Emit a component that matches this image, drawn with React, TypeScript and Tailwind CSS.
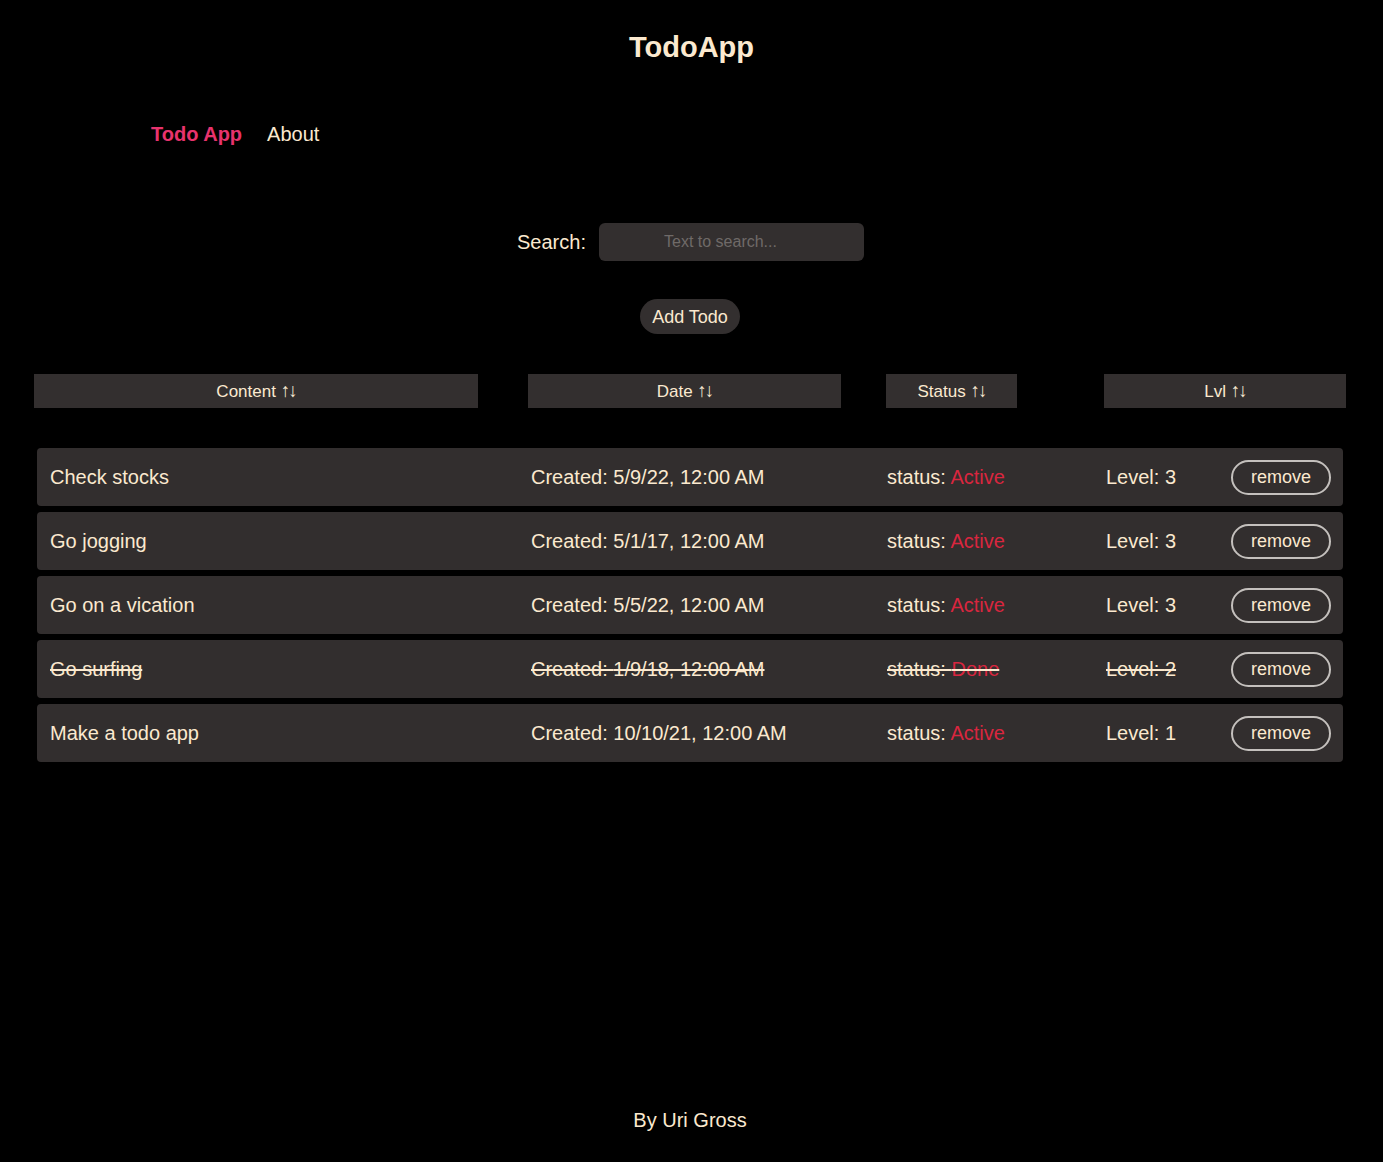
import { useState } from "react";

type Todo = {
  id: number;
  content: string;
  created: string;
  done: boolean;
  level: number;
};

const initialTodos: Todo[] = [
  { id: 1, content: "Check stocks", created: "5/9/22, 12:00 AM", done: false, level: 3 },
  { id: 2, content: "Go jogging", created: "5/1/17, 12:00 AM", done: false, level: 3 },
  { id: 3, content: "Go on a vication", created: "5/5/22, 12:00 AM", done: false, level: 3 },
  { id: 4, content: "Go surfing", created: "1/9/18, 12:00 AM", done: true, level: 2 },
  { id: 5, content: "Make a todo app", created: "10/10/21, 12:00 AM", done: false, level: 1 },
];

function SortLabel({ label }: { label: string }) {
  return (
    <>
      {label} <span className="text-[19px] leading-[20px] tracking-[-2px] text-[#f3e6cf]">↑↓</span>
    </>
  );
}

export default function App() {
  const [todos, setTodos] = useState<Todo[]>(initialTodos);
  const [search, setSearch] = useState("");

  const visible = todos.filter((t) => t.content.toLowerCase().includes(search.toLowerCase()));

  return (
    <div className="min-h-screen flex flex-col bg-black text-[#fbe9cf] font-['Liberation_Sans',Arial,sans-serif]">
      <header className="pt-[29px]">
        <h1 className="text-center text-[29px] leading-[36px] font-bold">TodoApp</h1>
        <nav className="flex items-center gap-[25px] pl-[151px] mt-[57px] text-[20px] leading-[24px]">
          <a className="font-bold text-[#e8336d] cursor-pointer">Todo App</a>
          <a className="cursor-pointer">About</a>
        </nav>
      </header>

      <main className="flex-1 flex flex-col">
        <div className="flex items-center justify-center gap-[13px] mt-[77px] pr-[2px]">
          <label className="text-[20px] leading-[24px]">Search:</label>
          <input
            value={search}
            onChange={(e) => setSearch(e.target.value)}
            placeholder="Text to search..."
            className="w-[265px] h-[38px] rounded-[6px] bg-[#332f2f] text-center pr-[22px] text-[16px] text-[#fbe9cf] placeholder:text-[#6f6a68] outline-none"
          />
        </div>

        <div className="flex justify-center mt-[38px]">
          <button className="w-[100px] h-[35px] rounded-full bg-[#332f2f] text-[18px] leading-[22px] -ml-[3px]">Add Todo</button>
        </div>

        <div className="flex mt-[40px] pl-[34px] text-[17px] leading-[20px]">
          <button className="w-[444px] h-[34px] bg-[#332f2f]"><SortLabel label="Content" /></button>
          <button className="w-[313px] h-[34px] ml-[50px] bg-[#332f2f]"><SortLabel label="Date" /></button>
          <button className="w-[131px] h-[34px] ml-[45px] bg-[#332f2f]"><SortLabel label="Status" /></button>
          <button className="w-[242px] h-[34px] ml-[87px] bg-[#332f2f]"><SortLabel label="Lvl" /></button>
        </div>

        <ul className="flex flex-col gap-[6px] mt-[40px] mx-[37px] w-[1306px]">
          {visible.map((todo) => {
            const strike = todo.done ? "line-through" : "";
            return (
              <li
                key={todo.id}
                className="grid grid-cols-[481px_356px_219px_125px_100px] items-center h-[58px] pl-[13px] rounded-[4px] bg-[#322e2e] text-[20px] leading-[24px]"
              >
                <span className={strike}>{todo.content}</span>
                <span className={strike}>Created: {todo.created}</span>
                <span className={strike}>
                  status: <span className="text-[#d9263f]">{todo.done ? "Done" : "Active"}</span>
                </span>
                <span className={strike}>Level: {todo.level}</span>
                <button
                  onClick={() => setTodos((prev) => prev.filter((t) => t.id !== todo.id))}
                  className="h-[35px] w-[100px] rounded-full border-2 border-[#c4c0bd] text-[18px] leading-[22px]"
                >
                  remove
                </button>
              </li>
            );
          })}
        </ul>
      </main>

      <footer className="text-center text-[20px] leading-[24px] pb-[30px] -ml-[3px]">By Uri Gross</footer>
    </div>
  );
}
